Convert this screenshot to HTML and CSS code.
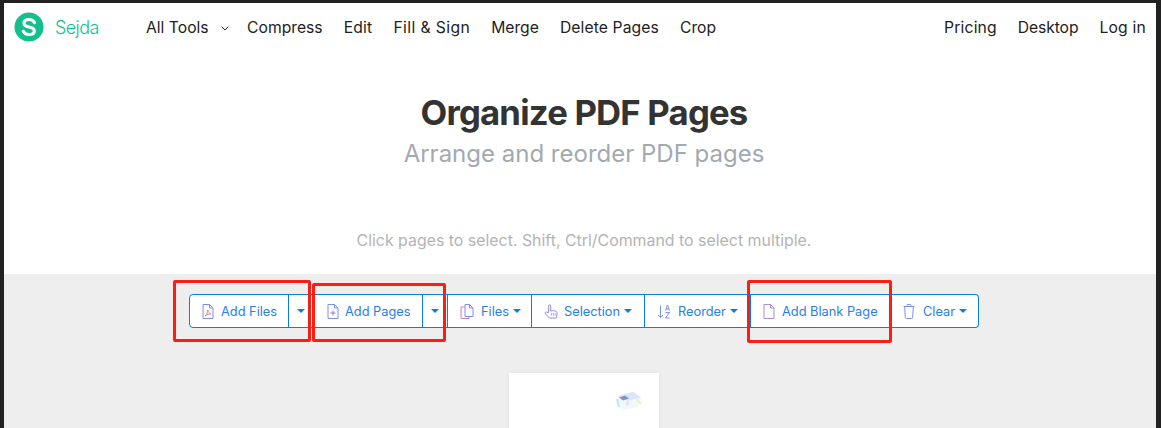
FILE: index.html
```html
<!DOCTYPE html>
<html lang="en">
<head>
<meta charset="utf-8">
<title>Organize PDF Pages</title>
<link rel="stylesheet" href="styles.css">
</head>
<body>
<div class="frame">
  <header class="nav">
    <a class="brand">
      <svg class="brand-mark" viewBox="0 0 30 30" width="30" height="30"><circle cx="15" cy="15" r="14.500" fill="#14bf8e"/><path d="M20.500 10.500C19.500 8.500 17.500 7.500 15 7.500 12 7.500 10 9 10 11.300 10 13.500 11.800 14.400 15 15 18.200 15.600 20.300 16.600 20.300 18.900 20.300 21.200 18 22.500 15 22.500 12.300 22.500 10.200 21.400 9.400 19.300" fill="none" stroke="#fff" stroke-width="3.200" stroke-linecap="round"/></svg>
      <span class="brand-name">Sejda</span>
    </a>
    <nav class="nav-main">
      <a class="nav-link nav-tools">All Tools <svg class="chev" viewBox="0 0 8 5" width="8" height="5"><path d="M.6.6 4 4 7.400.6" fill="none" stroke="#222" stroke-width="1"/></svg></a>
      <a class="nav-link">Compress</a>
      <a class="nav-link nav-edit">Edit</a>
      <a class="nav-link nav-fill">Fill &amp; Sign</a>
      <a class="nav-link">Merge</a>
      <a class="nav-link nav-delete">Delete Pages</a>
      <a class="nav-link">Crop</a>
    </nav>
    <nav class="nav-side">
      <a class="nav-link nav-pricing">Pricing</a>
      <a class="nav-link nav-desktop">Desktop</a>
      <a class="nav-link nav-login">Log in</a>
    </nav>
  </header>

  <section class="hero">
    <h1 class="title">Organize PDF Pages</h1>
    <p class="subtitle">Arrange and reorder PDF pages</p>
    <p class="hint">Click pages to select. Shift, Ctrl/Command to select multiple.</p>
  </section>

  <section class="workspace">
    <div class="toolbar">
      <button class="btn btn-addfiles"><svg class="ico" viewBox="0 0 12 15"><path d="M1 .5h6.500L11 4v10.500H1zM7.500.5V4H11" fill="none" stroke="#7f8fe6"/><path d="M3 12c1.500-1 2.700-3.500 2.800-6 .5 2 1.500 3.500 3.400 4-2-.2-4.500.4-6.200 2z" fill="none" stroke="#d9789a" stroke-width=".9"/></svg>Add Files</button>
      <button class="btn btn-split"><i class="caret"></i></button>
      <button class="btn btn-addpages"><svg class="ico" viewBox="0 0 12 15"><path d="M1 .5h6.500L11 4v10.500H1zM7.500.5V4H11" fill="none" stroke="#7f8fe6"/><path d="M6 6.500v5M3.500 9h5" fill="none" stroke="#a070d0"/></svg>Add Pages</button>
      <button class="btn btn-split"><i class="caret"></i></button>
      <button class="btn btn-files"><svg class="ico ico-wide" viewBox="0 0 14 15"><path d="M5 .5h4.500L13 4v8.500H5zM9.500 .5V4H13" fill="none" stroke="#7f8fe6"/><path d="M5 3H1v11.500h8v-2" fill="none" stroke="#b483dc"/></svg>Files<i class="caret caret-gap"></i></button>
      <button class="btn btn-selection"><svg class="ico ico-wide" viewBox="0 0 14 16"><path d="M4.500 9V2a1.100 1.100 0 0 1 2.200 0v5.500c2-.6 5-.3 6 .5.700.5.800 1 .800 2 0 2-.5 3-1 5H5.500L1 10.500c-1-1.300.8-2.800 2-1.600z" fill="none" stroke="#8a85e0"/><path d="M7.500 9.500v3M9.500 9.500v3M11.500 9.500v3" stroke="#a588dc" fill="none" stroke-width=".8"/></svg>Selection<i class="caret caret-gap"></i></button>
      <button class="btn btn-reorder"><svg class="ico ico-wide" viewBox="0 0 14 15"><path d="M3.500 1.500v12M1 11l2.500 2.500L6 11" fill="none" stroke="#6f97e6"/><path d="M8.500 6.500 10.500 1l2 5.500M9 5h3M8.500 8.500h4l-4 5.500h4" fill="none" stroke="#7f8fe6"/></svg>Reorder<i class="caret caret-gap"></i></button>
      <button class="btn btn-blank"><svg class="ico" viewBox="0 0 12 15"><path d="M1 .5h6.500L11 4v10.500H1zM7.500.5V4H11" fill="none" stroke="#a78bdc"/></svg>Add Blank Page</button>
      <button class="btn btn-clear"><svg class="ico" viewBox="0 0 12 15"><path d="M.5 2.500h11M4 2.500V1.200c0-.4.300-.7.700-.7h2.600c.4 0 .7.300.7.700v1.300M1.700 2.500l.6 11c0 .6.400 1 1 1h5.400c.6 0 1-.4 1-1l.6-11" fill="none" stroke="#7f8fe6"/></svg>Clear<i class="caret caret-gap"></i></button>
    </div>
    <div class="page-area">
      <div class="page-card">
        <svg class="thumb" viewBox="0 0 26 20" width="26" height="20"><path d="M1 6 17 1l8 6-3 9-13 3-7-3z" fill="#f3f7fc"/><path d="M2 5 17 .5l8 6L11 10z" fill="#d8e8fa"/><path d="M3 6.500 9 4.500l4 3-6 2z" fill="#7f96bd"/><path d="M1 8l2 8" stroke="#b4ecf2" stroke-width="2"/><path d="M21 9l4 4" stroke="#f6ecc4" stroke-width="2"/><path d="M10 11l3-1v4l-3 1z" fill="#d8e6f6"/></svg>
      </div>
    </div>
    <i class="mark mark-files"></i>
    <i class="mark mark-pages"></i>
    <i class="mark mark-blank"></i>
  </section>
</div>
</body>
</html>
```

FILE: styles.css
```css
* { box-sizing: border-box; }
html, body { margin: 0; height: 100%; }
body { background: #fff; font-family: "Inter", "Liberation Sans", sans-serif; overflow: hidden; }
.frame { width: 1161px; height: 428px; border-top: 3px solid #222; border-left: 4px solid #222; border-right: 5px solid #222; display: flex; flex-direction: column; overflow: hidden; }

.nav { display: flex; align-items: center; height: 48px; padding: 0 10px; font-size: 15.700px; color: #222; flex: none; }
.brand { display: flex; align-items: center; gap: 11px; width: 132px; }
.brand-name { color: #14bf8e; font-size: 18px; font-weight: 300; letter-spacing: -.6px; }
.nav-main, .nav-side { display: flex; gap: 21px; }
.nav-side { margin-left: auto; }
.nav-link { white-space: nowrap; color: #222; }
.nav-tools { margin-right: -3px; }
.nav-edit { letter-spacing: .2px; }
.nav-fill { letter-spacing: .4px; }
.nav-delete { letter-spacing: .1px; }
.nav-pricing { letter-spacing: .15px; }
.nav-desktop { letter-spacing: -.1px; }
.nav-login { letter-spacing: .2px; }
.chev { margin-left: 8px; vertical-align: 2px; }

.hero { height: 223px; flex: none; text-align: center; padding-left: 8px; }
.title { margin: 41px 0 0; font-size: 34.700px; line-height: 40px; font-weight: 700; letter-spacing: -.8px; color: #333; }
.subtitle { margin: 4px 0 0; font-size: 24px; line-height: 36px; color: #a2aab0; }
.hint { margin: 59px 0 0; font-size: 15.900px; line-height: 20px; color: #b4b4b4; }

.workspace { position: relative; flex: 1; background: #eee; padding-top: 20px; overflow: hidden; }
.toolbar { display: flex; height: 34px; margin-left: 185px; }
.btn { display: flex; align-items: center; height: 34px; margin-left: -1px; padding: 0 0 0 12px; border: 1px solid #0a7fe0; background: #fff; color: #2680e6; font: 12.800px "Inter", "Liberation Sans", sans-serif; white-space: nowrap; }
.btn:first-child { margin-left: 0; border-radius: 4px 0 0 4px; }
.btn:last-of-type { border-radius: 0 4px 4px 0; }
.btn-addfiles { width: 100px; }
.btn-addpages { width: 110px; padding-left: 13px; }
.btn-split { width: 26px; padding: 0; justify-content: center; }
.btn-files { width: 85px; }
.btn-selection { width: 114px; }
.btn-reorder { width: 107px; }
.btn-blank { width: 139px; border-right: 0; }
.btn-clear { width: 91px; border-left: 0; padding-left: 15px; }
.ico { width: 12px; height: 15px; margin-right: 7px; flex: none; }
.ico-wide { width: 14px; }
.btn-addpages .ico, .btn-selection .ico { margin-right: 6px; }
.btn-clear .ico { margin-right: 8px; }
.caret { display: inline-block; width: 0; height: 0; border: 4px solid transparent; border-top-color: #0a7fe0; border-bottom: 0; }
.caret-gap { margin-left: 4px; }

.page-area { display: flex; justify-content: center; margin-top: 45px; }
.page-card { width: 150px; height: 200px; margin-left: 8px; background: #fff; box-shadow: 0 0 6px rgba(0,0,0,.05); display: flex; justify-content: flex-end; align-items: flex-start; padding: 18px 17px 0 0; }
.thumb { display: block; }

.mark { position: absolute; border: 3px solid #fa1e14; border-radius: 2px; pointer-events: none; }
.mark-files { left: 169px; top: 6px; width: 138px; height: 62px; }
.mark-pages { left: 308px; top: 9px; width: 134px; height: 59px; }
.mark-blank { left: 743px; top: 6px; width: 145px; height: 63px; }
```
